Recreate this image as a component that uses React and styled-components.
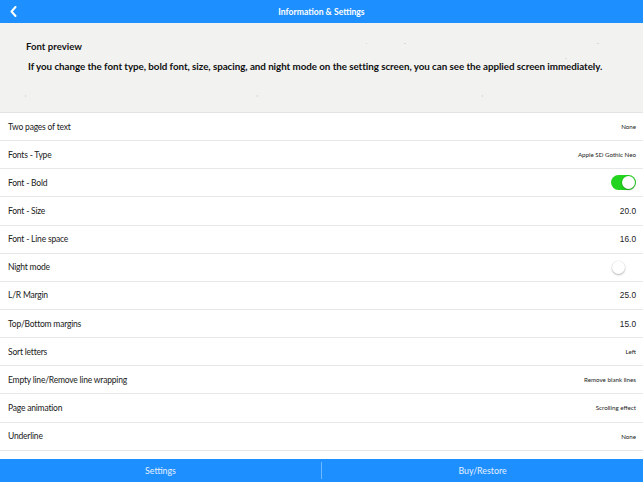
import React, { useState } from 'react'
import styled, { createGlobalStyle } from 'styled-components'

const GlobalStyle = createGlobalStyle`
    html, body, #root {
        margin: 0;
        padding: 0;
        height: 100%;
    }
    body {
        font-family: Lato, "Noto Sans", sans-serif;
        background: #ffffff;
        color: #1c1c1c;
        overflow: hidden;
    }
`

const Page = styled.div`
    height: 100vh;
    display: flex;
    flex-direction: column;
`

// Barra superior azul con la flecha de volver y el título
const TopBar = styled.header`
    height: 23px;
    flex-shrink: 0;
    background-color: #1e8fff;
    display: flex;
    align-items: center;
`

const BackButton = styled.button`
    width: 28px;
    height: 23px;
    padding: 0 0 0 10px;
    border: none;
    background: transparent;
    display: flex;
    align-items: center;
    cursor: pointer;
`

const Title = styled.h1`
    flex: 1;
    margin: 0 28px 0 0;
    text-align: center;
    font-size: 8.6px;
    font-weight: 700;
    color: #ffffff;
`

/* ---------- VISTA PREVIA DE LA FUENTE ---------- */
const Preview = styled.section`
    height: 90px;
    flex-shrink: 0;
    box-sizing: border-box;
    padding: 18px 0 0 26px;
    border-bottom: 1px solid #e4e4e4;
    background-color: #f2f2f0;
    background-image:
        radial-gradient(circle at 24% 47%, #d9d9d6 0.6px, transparent 1px),
        radial-gradient(circle at 57% 23%, #dadad7 0.6px, transparent 1px),
        radial-gradient(circle at 63% 23%, #dadad7 0.6px, transparent 1px),
        radial-gradient(circle at 93% 23%, #d9d9d6 0.6px, transparent 1px),
        radial-gradient(circle at 4% 82%, #dcdcd9 0.6px, transparent 1px),
        radial-gradient(circle at 40% 82%, #dcdcd9 0.6px, transparent 1px),
        radial-gradient(circle at 75% 82%, #dcdcd9 0.6px, transparent 1px),
        radial-gradient(circle at 88% 40%, #dcdcd9 0.6px, transparent 1px);
`

const PreviewTitle = styled.div`
    font-size: 9.6px;
    font-weight: 700;
    color: #151515;
    line-height: 12px;
`

const PreviewText = styled.p`
    margin: 7px 0 0 2px;
    font-size: 9.8px;
    font-weight: 700;
    letter-spacing: -0.05px;
    color: #101010;
    line-height: 12px;
    white-space: nowrap;
`

/* ---------- LISTA DE AJUSTES ---------- */
const List = styled.div`
    flex: 1;
    overflow: hidden;
    background: #ffffff;
`

const Row = styled.div`
    height: 28.15px;
    box-sizing: border-box;
    padding: 0 7px 0 8px;
    display: flex;
    align-items: center;
    justify-content: space-between;
    border-bottom: 1px solid #e8e8e8;
`

const Label = styled.span`
    font-size: 8.5px;
    letter-spacing: -0.2px;
    color: #202020;
`

// Los valores numéricos usan una fuente más grande que los de texto
const Value = styled.span`
    font-family: ${props => props.number ? '"Liberation Sans", Arial, sans-serif' : 'inherit'};
    font-size: ${props => props.number ? '8.3px' : '6.2px'};
    color: #222222;
`

const Track = styled.div`
    width: 25px;
    height: 15px;
    border-radius: 8px;
    box-sizing: border-box;
    position: relative;
    background-color: ${props => props.on ? '#22d41f' : '#ffffff'};
    cursor: pointer;
`

const Knob = styled.div`
    position: absolute;
    top: 1px;
    left: ${props => props.on ? '11px' : '1px'};
    width: 13px;
    height: 13px;
    border-radius: 50%;
    background: #ffffff;
    box-shadow: 0 1px 2px rgba(0, 0, 0, 0.28), 0 0 0 0.5px rgba(0, 0, 0, 0.06);
`

/* ---------- BARRA INFERIOR ---------- */
const BottomBar = styled.footer`
    height: 23px;
    flex-shrink: 0;
    background-color: #1e8fff;
    display: flex;
    align-items: center;
`

const Tab = styled.button`
    flex: 1;
    height: 100%;
    border: none;
    background: transparent;
    font-family: Lato, "Noto Sans", sans-serif;
    font-size: 8.8px;
    color: #e4efff;
    cursor: pointer;
`

const Divider = styled.div`
    width: 1px;
    height: 17px;
    background: #6fb7ff;
`

const Toggle = ({ on, onChange }) => (
    <Track on={on ? 1 : 0} onClick={onChange}>
        <Knob on={on ? 1 : 0} />
    </Track>
)

const App = () => {
    const [bold, setBold] = useState(true)
    const [night, setNight] = useState(false)

    const rows = [
        { label: 'Two pages of text', value: 'None' },
        { label: 'Fonts - Type', value: 'Apple SD Gothic Neo' },
        { label: 'Font - Bold', toggle: 'bold' },
        { label: 'Font - Size', value: '20.0', number: true },
        { label: 'Font - Line space', value: '16.0', number: true },
        { label: 'Night mode', toggle: 'night' },
        { label: 'L/R Margin', value: '25.0', number: true },
        { label: 'Top/Bottom margins', value: '15.0', number: true },
        { label: 'Sort letters', value: 'Left' },
        { label: 'Empty line/Remove line wrapping', value: 'Remove blank lines' },
        { label: 'Page animation', value: 'Scrolling effect' },
        { label: 'Underline', value: 'None' },
    ]

    return (
        <Page>
            <GlobalStyle />
            <TopBar>
                <BackButton>
                    <svg width="7" height="11" viewBox="0 0 7 11">
                        <polyline points="5.5,1 1.5,5.5 5.5,10" fill="none" stroke="#fff" strokeWidth="2" strokeLinecap="round" strokeLinejoin="round" />
                    </svg>
                </BackButton>
                <Title>Information &amp; Settings</Title>
            </TopBar>

            <Preview>
                <PreviewTitle>Font preview</PreviewTitle>
                <PreviewText>
                    If you change the font type, bold font, size, spacing, and night mode on the setting screen, you can see the applied screen immediately.
                </PreviewText>
            </Preview>

            <List>
                {rows.map(row => (
                    <Row key={row.label}>
                        <Label>{row.label}</Label>
                        {row.toggle === 'bold' && <Toggle on={bold} onChange={() => setBold(!bold)} />}
                        {row.toggle === 'night' && <Toggle on={night} onChange={() => setNight(!night)} />}
                        {!row.toggle && <Value number={row.number ? 1 : 0}>{row.value}</Value>}
                    </Row>
                ))}
            </List>

            <BottomBar>
                <Tab>Settings</Tab>
                <Divider />
                <Tab>Buy/Restore</Tab>
            </BottomBar>
        </Page>
    )
}

export default App
